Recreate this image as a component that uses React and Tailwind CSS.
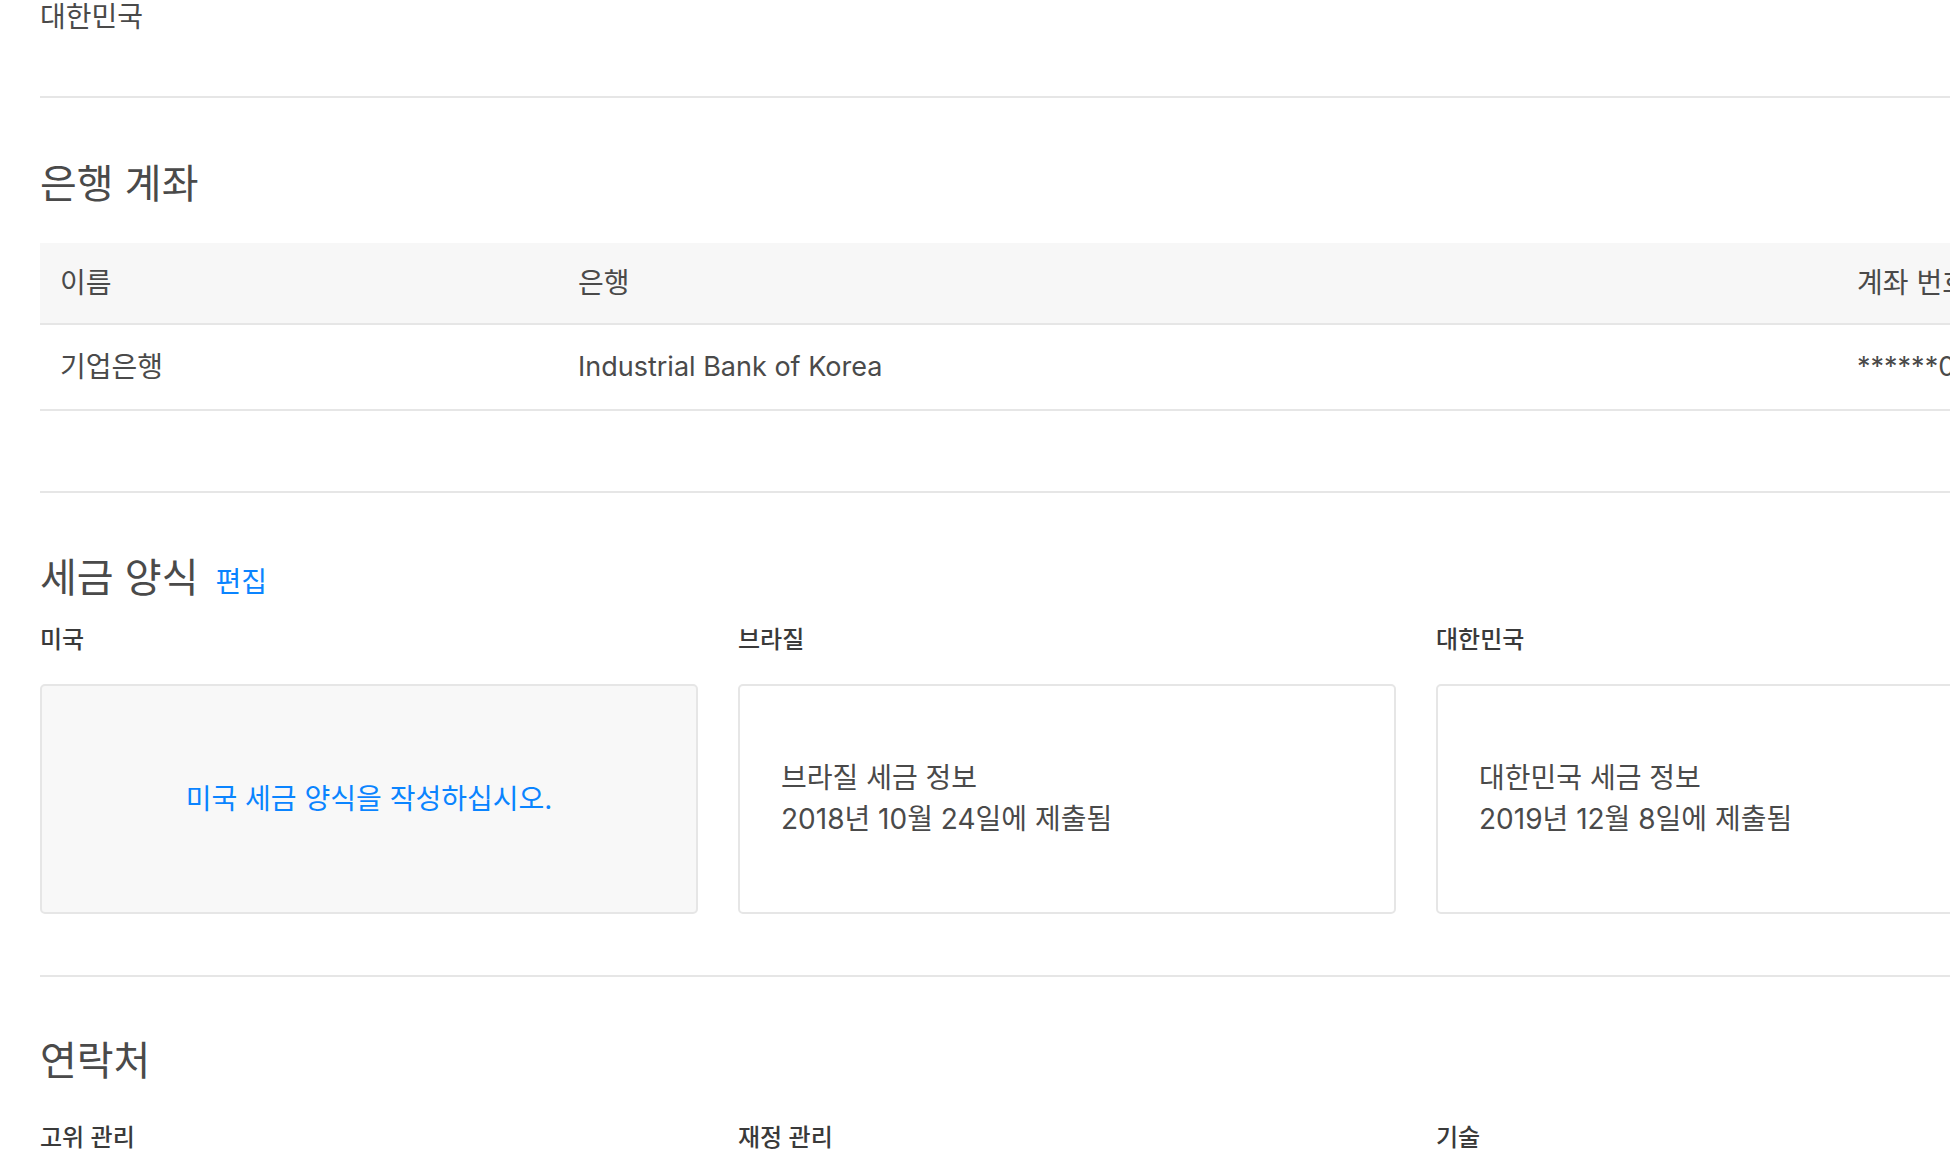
import React from 'react';

const font = { fontFamily: 'Inter, "Noto Sans CJK KR", sans-serif' };

const Divider = ({ className = '' }) => <div className={`h-[2px] bg-[#e6e6e6] ${className}`} />;

const SectionTitle = ({ children, action }) => (
    <div className="flex items-baseline">
        <h2 className="text-[40px] leading-[44px] font-normal text-[#4a4a4a]">{children}</h2>
        {action && <a className="ml-[17px] text-[28px] leading-[32px] text-[#0a84ff]">{action}</a>}
    </div>
);

const taxForms = [
    { country: '미국', empty: true, text: '미국 세금 양식을 작성하십시오.' },
    { country: '브라질', title: '브라질 세금 정보', date: '2018년 10월 24일에 제출됨' },
    { country: '대한민국', title: '대한민국 세금 정보', date: '2019년 12월 8일에 제출됨' },
];

const contacts = ['고위 관리', '재정 관리', '기술'];

export default function App() {
    return (
        <div className="w-[1950px] h-[1154px] overflow-hidden bg-white" style={font}>
            <div className="w-[2092px] pl-[40px] text-[#4a4a4a]">
                {/* previous section tail */}
                <div className="pt-[1px] text-[28px] leading-[32px]">대한민국</div>
                <Divider className="mt-[63px]" />

                {/* bank accounts */}
                <div className="mt-[64px]">
                    <SectionTitle>은행 계좌</SectionTitle>
                </div>
                <div className="mt-[37px] text-[27px]">
                    <div className="flex items-center h-[82px] bg-[#f7f7f7] border-b-2 border-[#e6e6e6]">
                        <div className="w-[518px] pl-[20px] text-[28px]">이름</div>
                        <div className="w-[1279px] pl-[20px] text-[28px]">은행</div>
                        <div className="pl-[20px] whitespace-nowrap text-[28px]">계좌 번호</div>
                    </div>
                    <div className="flex items-center h-[86px] border-b-2 border-[#e6e6e6]">
                        <div className="w-[518px] pl-[20px] text-[28px]">기업은행</div>
                        <div className="w-[1279px] pl-[20px]">Industrial Bank of Korea</div>
                        <div className="pl-[20px] whitespace-nowrap">******0123</div>
                    </div>
                </div>
                <Divider className="mt-[80px]" />

                {/* tax forms */}
                <div className="mt-[63px]">
                    <SectionTitle action="편집">세금 양식</SectionTitle>
                </div>
                <div className="mt-[25px] grid grid-cols-[658px_658px_658px] gap-x-[40px]">
                    {taxForms.map((f) => (
                        <div key={f.country}>
                            <div className="text-[24px] leading-[30px] font-medium text-[#3a3a3a]">{f.country}</div>
                            {f.empty ? (
                                <div className="mt-[29px] h-[230px] rounded-[5px] border-2 border-[#e6e6e6] bg-[#f8f8f8] flex items-center justify-center">
                                    <a className="text-[28px] leading-[32px] text-[#0a84ff]">{f.text}</a>
                                </div>
                            ) : (
                                <div className="mt-[29px] h-[230px] rounded-[5px] border-2 border-[#e6e6e6] bg-white flex flex-col justify-center pl-[41px] text-[28px] leading-[41px]">
                                    <div>{f.title}</div>
                                    <div>{f.date}</div>
                                </div>
                            )}
                        </div>
                    ))}
                </div>
                <Divider className="mt-[61px]" />

                {/* contacts */}
                <div className="mt-[62px]">
                    <SectionTitle>연락처</SectionTitle>
                </div>
                <div className="mt-[40px] grid grid-cols-[658px_658px_658px] gap-x-[40px]">
                    {contacts.map((c) => (
                        <div key={c} className="text-[24px] leading-[30px] font-medium text-[#3a3a3a]">{c}</div>
                    ))}
                </div>
            </div>
        </div>
    );
}
